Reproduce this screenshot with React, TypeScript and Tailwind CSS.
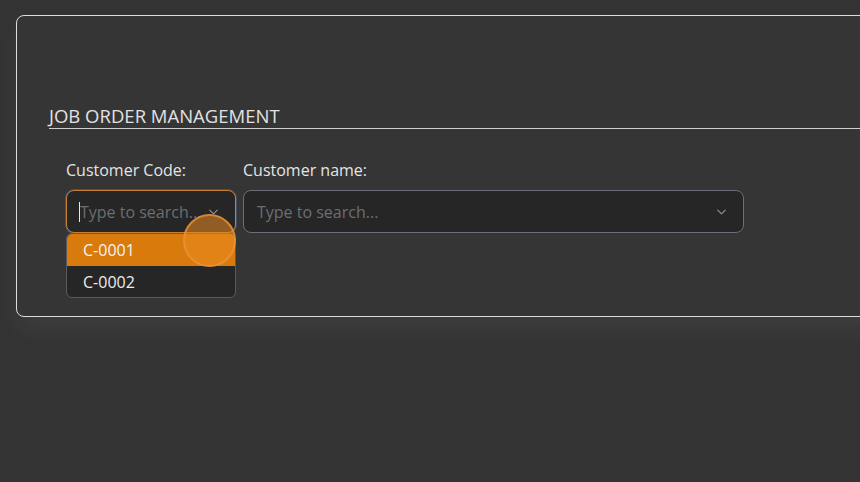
import { ChevronDown } from "lucide-react";

const font = { fontFamily: '"Open Sans", "Noto Sans", sans-serif' };

function SearchSelect({ width, focused }: { width: string; focused?: boolean }) {
  return (
    <div
      className={`relative flex h-[43px] items-center rounded-lg border-[1.5px] bg-[#262626] ${width} ${
        focused
          ? "border-[#c7802f] shadow-[0_0_0_1px_rgba(90,110,160,0.45)]"
          : "border-[#6c6f77]"
      }`}
    >
      {focused && <span className="absolute left-[12px] top-[11px] h-[20px] w-px bg-[#e8e8e8]" />}
      <span className="pl-[13px] text-[16px] text-[#6c6e72] whitespace-nowrap overflow-hidden pr-[40px]">
        Type to search...
      </span>
      <ChevronDown
        className="absolute right-[14px] top-1/2 -translate-y-1/2 text-[#8a8c90]"
        size={15}
        strokeWidth={2}
      />
    </div>
  );
}

export default function App() {
  return (
    <div className="h-[482px] w-[860px] overflow-hidden bg-[#333333]" style={font}>
      <div className="ml-4 mt-[15px] h-[302px] w-[900px] rounded-lg border border-[#dcdcdc] bg-[#353535] pl-[32px] pt-[87px] shadow-[0_14px_24px_rgba(255,255,255,0.05)]">
        <div className="border-b border-[#cfcfcf] text-[18.5px] leading-[25px] text-[#e2e2e2]">
          JOB ORDER MANAGEMENT
        </div>
        <div className="mt-[31px] flex gap-[7px] pl-[17px]">
          <div className="relative flex flex-col">
            <label className="text-[16px] leading-[20px] text-[#e4e4e4]">Customer Code:</label>
            <div className="mt-[10px]">
              <SearchSelect width="w-[170px]" focused />
            </div>
            <div className="absolute left-0 top-[73px] w-[170px] overflow-hidden rounded-md border border-[#5a5a5e] bg-[#262626]">
              <div className="flex h-[32px] items-center bg-[#d97a0c] pl-[16px] text-[16px] text-[#f3f3f3]">
                C-0001
              </div>
              <div className="flex h-[31px] items-center pl-[16px] text-[16px] text-[#ececec]">
                C-0002
              </div>
            </div>
            <div className="absolute left-[117px] top-[54px] h-[53px] w-[53px] rounded-full border-2 border-[#e8923a]/80 bg-[#ea8a22]/55" />
          </div>
          <div className="flex flex-col">
            <label className="text-[16px] leading-[20px] text-[#e4e4e4]">Customer name:</label>
            <div className="mt-[10px]">
              <SearchSelect width="w-[501px]" />
            </div>
          </div>
        </div>
      </div>
    </div>
  );
}
